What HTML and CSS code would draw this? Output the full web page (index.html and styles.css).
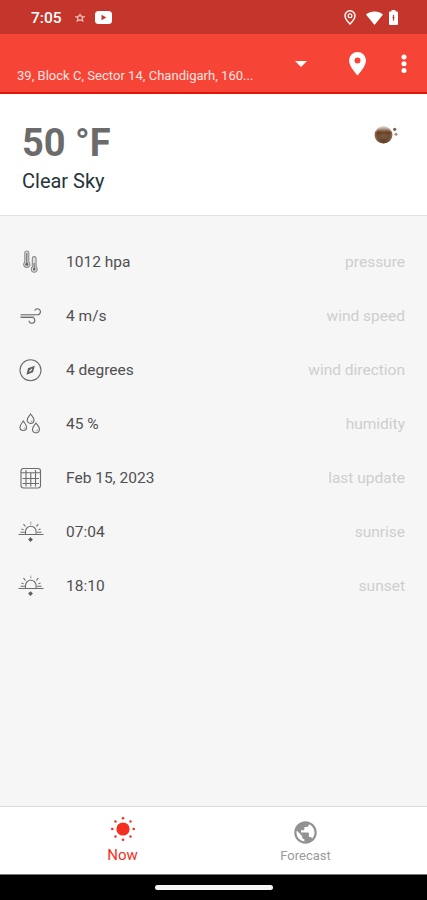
FILE: index.html
```html
<!DOCTYPE html>
<html lang="en">
<head>
  <meta charset="UTF-8" />
  <meta name="viewport" content="width=device-width, initial-scale=1" />
  <title>Weather</title>
  <link rel="stylesheet" href="styles.css">
</head>
<body>
  <svg class="sprite">
    <symbol id="horizon" viewBox="0 0 26 24">
      <path d="M0.500 14.500h25M2.500 12.200h4.500M19 12.200h4.500M7.500 14.200V11.500a5.300 5.300 0 0 1 10.600 0v2.700M5.500 4.200l2 2.300M20.300 4.200l-2 2.300M3.500 9l2 .8M22.500 9l-2 .8" />
      <path class="faint" d="M12.800 1.500v3.200" />
      <path class="solid" d="M12.500 17.200l2.400 2.400-2.400 2.400-2.400-2.400z" />
    </symbol>
  </svg>

  <div class="app">
    <div class="status-bar">
      <span class="clock">7:05</span>
      <svg class="status-misc" width="12" height="12" viewBox="0 0 12 12">
        <circle cx="6" cy="6" r="2.400" />
        <path d="M6 3.500V1.700M3.500 5.200L1.200 4.700M8.500 5.200l2.300-.5M4.300 8L2.500 9.500M7.700 8l1.800 1.500" />
      </svg>
      <svg class="status-video" width="17" height="13" viewBox="0 0 17 13">
        <rect width="17" height="13" rx="3.500" fill="#fff" />
        <path d="M6.500 3.700v5.600l4.800-2.800z" fill="#c4362c" />
      </svg>
      <div class="status-right">
        <svg width="12" height="15" viewBox="0 0 12 15">
          <path d="M6 .8a5 5 0 0 0-5 5c0 3.300 5 8.200 5 8.200s5-4.900 5-8.200a5 5 0 0 0-5-5z" fill="none" stroke="#fff" stroke-width="1.400" />
          <circle cx="6" cy="5.800" r="1.900" fill="none" stroke="#fff" stroke-width="1.200" />
        </svg>
        <svg class="wifi" width="17" height="14" viewBox="0 0 17 14">
          <path d="M0 3.500C4.500-.6 12.500-.6 17 3.500L8.500 14z" fill="#fff" />
        </svg>
        <svg class="battery" width="9" height="15" viewBox="0 0 9 15">
          <path d="M2.500 0h4v1.500H8A1 1 0 0 1 9 2.500V14a1 1 0 0 1-1 1H1a1 1 0 0 1-1-1V2.500a1 1 0 0 1 1-1h1.500z" fill="#fff" />
          <path d="M4.500 5v5.500M3.500 7.500h2" stroke="#c4362c" stroke-width="1.200" />
        </svg>
      </div>
    </div>

    <header class="toolbar">
      <span class="address">39, Block C, Sector 14, Chandigarh, 160...</span>
      <svg class="arrow" width="12" height="6" viewBox="0 0 12 6"><path d="M0 0h12L6 6z" fill="#fff" /></svg>
      <svg class="pin" width="17" height="24" viewBox="0 0 17 24">
        <path fill="#fff" fill-rule="evenodd" d="M8.500 0A8.500 8.500 0 0 0 0 8.500C0 14.500 8.500 23.500 8.500 23.500S17 14.500 17 8.500A8.500 8.500 0 0 0 8.500 0zm0 5.500a3 3 0 1 1 0 6 3 3 0 0 1 0-6z" />
      </svg>
      <svg class="more" width="6" height="20" viewBox="0 0 6 20" fill="#fff">
        <circle cx="3" cy="3" r="2.500" /><circle cx="3" cy="9.800" r="2.500" /><circle cx="3" cy="16.500" r="2.500" />
      </svg>
    </header>

    <section class="summary">
      <div>
        <h1 class="temp">50 °F</h1>
        <p class="sky">Clear Sky</p>
      </div>
      <svg class="planet" width="24" height="20" viewBox="0 0 24 20">
        <defs>
          <radialGradient id="ball" cx=".5" cy=".5" r=".5">
            <stop offset="0" stop-color="#70482a" />
            <stop offset=".7" stop-color="#633b20" />
            <stop offset="1" stop-color="#9a6b4b" />
          </radialGradient>
          <linearGradient id="shine" x1="0" y1="0" x2="0" y2="1">
            <stop offset="0" stop-color="#fff" stop-opacity=".75" />
            <stop offset=".35" stop-color="#fff" stop-opacity="0" />
            <stop offset="1" stop-color="#2b1206" stop-opacity=".45" />
          </linearGradient>
        </defs>
        <ellipse cx="9.500" cy="10" rx="9" ry="8.500" fill="url(#ball)" />
        <ellipse cx="9.500" cy="10" rx="9" ry="8.500" fill="url(#shine)" />
        <circle cx="20.700" cy="4.300" r="1.600" fill="#7b6052" />
        <circle cx="22" cy="9.300" r="1.500" fill="#a98f85" />
      </svg>
    </section>

    <main class="details">
      <div class="row">
        <svg class="icon" viewBox="0 0 26 24">
          <path class="tube" d="M6.800 12V3a2 2 0 0 1 4 0v9a3.100 3.100 0 1 1-4 0zM14.300 17V8.500a1.900 1.900 0 0 1 3.800 0V17a3 3 0 1 1-3.800 0z" />
          <path d="M8.800 3v11M16.200 13v6" />
          <circle class="solid" cx="8.800" cy="14.200" r="1.500" />
          <circle class="solid" cx="16.200" cy="19.200" r="1.200" />
        </svg>
        <span class="value">1012 hpa</span>
        <span class="label">pressure</span>
      </div>
      <div class="row">
        <svg class="icon" viewBox="0 0 26 24">
          <path d="M2.500 10.800h17a3 3 0 1 0-2.800-4.200M2.500 13.500h11.300a2.900 2.900 0 1 1-2.800 3.200" />
          <path class="faint" d="M2.500 12.200h14" />
        </svg>
        <span class="value">4 m/s</span>
        <span class="label">wind speed</span>
      </div>
      <div class="row">
        <svg class="icon" viewBox="0 0 26 24">
          <circle cx="12.500" cy="12.200" r="10.500" />
          <path class="solid" d="M16.800 7.800l-1.800 6.400-6.500 2.500 1.500-6.400z" />
          <path class="glint" d="M11.500 13.500l2.500-2.500" />
        </svg>
        <span class="value">4 degrees</span>
        <span class="label">wind direction</span>
      </div>
      <div class="row">
        <svg class="icon" viewBox="0 0 26 24">
          <path d="M12.600 2c1.300 2 3.400 3.700 3.400 6a3.400 3.400 0 0 1-6.800 0c0-2.300 2.100-4 3.400-6zM5.300 9c1.300 2 3.300 3.900 3.300 6.200a3.300 3.300 0 0 1-6.600 0C2 12.900 4 11 5.300 9zM18 11c1.300 2 3.500 3.700 3.500 6.300a3.500 3.500 0 0 1-7 0c0-2.600 2.200-4.300 3.500-6.300z" />
          <path class="faint" d="M12.800 9.700c.8-.1 1.300-.7 1.400-1.500M5.500 16.700c.8-.1 1.300-.7 1.400-1.500M18.200 18.900c.8-.1 1.300-.7 1.400-1.500" />
        </svg>
        <span class="value">45 %</span>
        <span class="label">humidity</span>
      </div>
      <div class="row">
        <svg class="icon" viewBox="0 0 26 24">
          <rect x="3" y="2.500" width="19.500" height="19.500" rx="2.500" />
          <path d="M3 6.800h19.500M4.500 12.500H21M4.500 17.500H21M8 4v16.500M12.800 6.800v13.700M17.500 4v16.500" />
        </svg>
        <span class="value">Feb 15, 2023</span>
        <span class="label">last update</span>
      </div>
      <div class="row">
        <svg class="icon"><use href="#horizon" /></svg>
        <span class="value">07:04</span>
        <span class="label">sunrise</span>
      </div>
      <div class="row">
        <svg class="icon"><use href="#horizon" /></svg>
        <span class="value">18:10</span>
        <span class="label">sunset</span>
      </div>
    </main>

    <nav class="tabs">
      <div class="tab active">
        <svg width="26" height="26" viewBox="0 0 26 26" fill="#f52e22">
          <circle cx="13" cy="13" r="6.600" />
          <circle cx="13" cy="2.300" r="1.300" /><circle cx="13" cy="23.700" r="1.300" />
          <circle cx="2.300" cy="13" r="1.300" /><circle cx="23.700" cy="13" r="1.300" />
          <circle cx="5.500" cy="5.500" r="1.200" /><circle cx="20.500" cy="5.500" r="1.200" />
          <circle cx="5.500" cy="20.500" r="1.200" /><circle cx="20.500" cy="20.500" r="1.200" />
        </svg>
        <span>Now</span>
      </div>
      <div class="tab">
        <svg width="27" height="27" viewBox="0 0 24 24" fill="#929292">
          <path d="M12 2C6.480 2 2 6.480 2 12s4.480 10 10 10 10-4.480 10-10S17.520 2 12 2zm-1 17.930c-3.950-.49-7-3.850-7-7.930 0-.62.080-1.210.21-1.790L9 15v1c0 1.100.9 2 2 2v1.930zm6.900-2.540c-.26-.81-1-1.390-1.900-1.390h-1v-3c0-.55-.45-1-1-1H8v-2h2c.55 0 1-.45 1-1V7h2c1.100 0 2-.9 2-2v-.41c2.930 1.190 5 4.060 5 7.410 0 2.080-.8 3.970-2.100 5.390z" />
        </svg>
        <span>Forecast</span>
      </div>
    </nav>

    <div class="nav-bar"><div class="handle"></div></div>
  </div>
</body>
</html>
```

FILE: styles.css
```css
body, html {
  margin: 0;
  padding: 0;
  height: 100%;
  font-family: Roboto, "Liberation Sans", sans-serif;
}

h1, p {
  margin: 0;
}

svg {
  display: block;
  flex-shrink: 0;
}

.sprite {
  display: none;
}

.app {
  display: flex;
  flex-direction: column;
  height: 900px;
  overflow: hidden;
  background-color: #f6f6f6;
}

.status-bar {
  display: flex;
  align-items: center;
  height: 34px;
  box-sizing: border-box;
  padding: 1px 29px 0 31px;
  background-color: #c4362c;
  color: #fff;
}

.clock {
  width: 43px;
  font-size: 15.5px;
  font-weight: 500;
}

.status-misc {
  fill: none;
  stroke: #f5c5c0;
  stroke-width: 1.2;
}

.status-video {
  margin-left: 9px;
}

.status-right {
  display: flex;
  align-items: center;
  margin-left: auto;
}

.wifi {
  margin-left: 10px;
}

.battery {
  margin-left: 6px;
}

.toolbar {
  display: flex;
  align-items: center;
  height: 60px;
  box-sizing: border-box;
  padding: 0 20px 0 17px;
  background-color: #f64437;
  border-bottom: 2px solid #e01409;
  color: #ffe4e1;
}

.address {
  width: 278px;
  padding-top: 25px;
  font-size: 13px;
  line-height: 16px;
  letter-spacing: 0.03px;
  white-space: nowrap;
}

.arrow {
  margin-top: 2px;
}

.pin {
  margin-top: 2px;
  margin-left: 42px;
}

.more {
  margin-top: 1px;
  margin-left: auto;
}

.summary {
  display: flex;
  justify-content: space-between;
  height: 122px;
  box-sizing: border-box;
  padding: 28px 29px 0 22px;
  background-color: #fff;
  border-bottom: 1px solid #e2e2e2;
}

.temp {
  font-size: 38px;
  line-height: 42px;
  font-weight: 700;
  color: #6b6b6b;
}

.sky {
  margin-top: 5px;
  font-size: 20px;
  line-height: 24px;
  color: #27343b;
}

.planet {
  margin-top: 3px;
}

.details {
  flex: 1;
  padding: 19px 22px 0 18px;
}

.row {
  display: flex;
  align-items: center;
  height: 54px;
}

.icon {
  width: 26px;
  height: 24px;
  margin-right: 22px;
  fill: none;
  stroke: #6c6c6c;
  stroke-width: 1.1;
}

.solid {
  fill: #5e5e5e;
  stroke: none;
}

.tube {
  fill: #dedede;
  stroke: #8a8a8a;
}

.glint {
  stroke: #f6f6f6;
}

.faint {
  stroke: #aaa;
}

.value {
  font-size: 15.5px;
  color: #505050;
}

.label {
  margin-left: auto;
  font-size: 15.5px;
  color: #cecece;
}

.tabs {
  display: flex;
  height: 69px;
  box-sizing: border-box;
  padding: 0 30px 0 31px;
  background-color: #fff;
  border-top: 1px solid #dcdcdc;
  border-bottom: 1px solid #777;
}

.tab {
  display: flex;
  flex: 1;
  flex-direction: column;
  align-items: center;
  padding-top: 12px;
  font-size: 13px;
  line-height: 16px;
  color: #9b9b9b;
}

.tab span {
  margin-top: 2px;
}

.tab.active {
  padding-top: 9px;
  font-size: 15px;
  line-height: 18px;
  color: #f52e22;
}

.tab.active span {
  margin-top: 4px;
}

.nav-bar {
  display: flex;
  justify-content: center;
  height: 25px;
  background-color: #000;
}

.handle {
  width: 118px;
  height: 5px;
  margin-top: 10px;
  border-radius: 3px;
  background-color: #f5f5f5;
}
```
